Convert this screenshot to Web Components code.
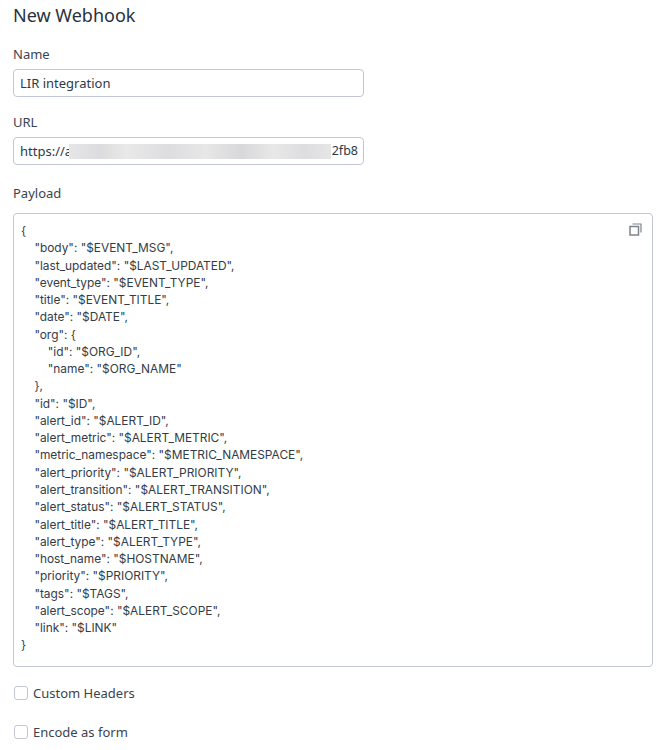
<!DOCTYPE html>
<html>
<head>
<meta charset="utf-8">
<style>
  html, body { margin: 0; background: #fff; }
</style>
</head>
<body>
<webhook-form>
  <form-field label="Name" class="name"><text-box>LIR integration</text-box></form-field>
  <form-field label="URL" class="url"><text-box redacted>https://a</text-box></form-field>
  <form-field label="Payload" class="payload"><payload-box>{
    "body": "$EVENT_MSG",
    "last_updated": "$LAST_UPDATED",
    "event_type": "$EVENT_TYPE",
    "title": "$EVENT_TITLE",
    "date": "$DATE",
    "org": {
        "id": "$ORG_ID",
        "name": "$ORG_NAME"
    },
    "id": "$ID",
    "alert_id": "$ALERT_ID",
    "alert_metric": "$ALERT_METRIC",
    "metric_namespace": "$METRIC_NAMESPACE",
    "alert_priority": "$ALERT_PRIORITY",
    "alert_transition": "$ALERT_TRANSITION",
    "alert_status": "$ALERT_STATUS",
    "alert_title": "$ALERT_TITLE",
    "alert_type": "$ALERT_TYPE",
    "host_name": "$HOSTNAME",
    "priority": "$PRIORITY",
    "tags": "$TAGS",
    "alert_scope": "$ALERT_SCOPE",
    "link": "$LINK"
}</payload-box></form-field>
  <check-row>Custom Headers</check-row>
  <check-row>Encode as form</check-row>
</webhook-form>

<script>
const uiFont = '"Noto Sans", "Open Sans", sans-serif';

class WebhookForm extends HTMLElement {
  constructor() {
    super();
    this.root = this.attachShadow({ mode: 'open' });
    this.root.innerHTML = `
      <style>
        :host {
          display: block;
          padding: 4px 12px 0 13px;
          color: #2d3a47;
          font-family: ${uiFont};
        }
        h1 {
          margin: 0 0 19px;
          font-size: 18px;
          line-height: 22px;
          font-weight: 400;
          color: #28323c;
        }
      </style>
      <h1>New Webhook</h1>
      <slot></slot>
    `;
  }
}

class FormField extends HTMLElement {
  constructor() {
    super();
    this.root = this.attachShadow({ mode: 'open' });
    this.root.innerHTML = `
      <style>
        :host { display: block; margin-bottom: 16px; }
        :host(.url) { margin-bottom: 19px; }
        label {
          display: block;
          font-size: 13px;
          line-height: 18px;
          margin-bottom: 6px;
          color: #3a4450;
        }
        :host(.payload) label { margin-bottom: 11px; }
      </style>
      <label></label>
      <slot></slot>
    `;
    this.root.querySelector('label').textContent = this.getAttribute('label');
  }
}

class TextBox extends HTMLElement {
  constructor() {
    super();
    this.root = this.attachShadow({ mode: 'open' });
    this.root.innerHTML = `
      <style>
        :host {
          display: block;
          position: relative;
          box-sizing: border-box;
          width: 351px;
          height: 28px;
          padding: 0 6px;
          border: 1px solid #c2c6d6;
          border-radius: 4px;
          font-size: 13px;
          line-height: 26px;
          color: #2d3a47;
          overflow: hidden;
          white-space: nowrap;
        }
        .end { display: none; position: absolute; right: 5px; top: 0; font-size: 12.5px; }
        .smear {
          display: none;
          position: absolute;
          left: 55px;
          top: 6px;
          width: 262px;
          height: 15px;
          background:
            linear-gradient(90deg, #e6e6e8, #dcdcde 12%, #e9e9ea 22%, #dddddf 38%, #e7e7e8 52%, #d8d8da 66%, #e8e8e9 78%, #dddddf 90%, #e6e6e8);
        }
        :host([redacted]) .end, :host([redacted]) .smear { display: block; }
      </style>
      <slot></slot><span class="smear"></span><span class="end">2fb8</span>
    `;
  }
}

class PayloadBox extends HTMLElement {
  constructor() {
    super();
    this.root = this.attachShadow({ mode: 'open' });
    this.root.innerHTML = `
      <style>
        :host {
          display: block;
          position: relative;
          box-sizing: border-box;
          width: 640px;
          height: 454px;
          padding: 8px 7px;
          border: 1px solid #c2c6d6;
          border-radius: 4px;
          font-family: Inter, "Liberation Sans", sans-serif;
          font-size: 11.9px;
          line-height: 17.27px;
          color: #333c47;
        }
        pre { margin: 0; font: inherit; }
        svg { position: absolute; top: 9px; right: 10px; }
      </style>
      <pre><slot></slot></pre>
      <svg width="13" height="13" viewBox="0 0 13 13" fill="none" stroke="#7d848c" stroke-width="1.2">
        <rect x="1" y="3.5" width="8.5" height="8.5" stroke-width="1.5"/>
        <path d="M3.5 1h8.5v8.5"/>
      </svg>
    `;
  }
}

class CheckRow extends HTMLElement {
  constructor() {
    super();
    this.root = this.attachShadow({ mode: 'open' });
    this.root.innerHTML = `
      <style>
        :host {
          display: flex;
          align-items: center;
          gap: 5px;
          height: 20px;
          margin-bottom: 19px;
          padding-left: 1px;
          font-size: 13px;
          color: #3a4450;
        }
        i {
          display: block;
          box-sizing: border-box;
          width: 14px;
          height: 14px;
          border: 1.5px solid #c2c6d6;
          border-radius: 3px;
        }
      </style>
      <i></i><slot></slot>
    `;
  }
}

customElements.define('webhook-form', WebhookForm);
customElements.define('form-field', FormField);
customElements.define('text-box', TextBox);
customElements.define('payload-box', PayloadBox);
customElements.define('check-row', CheckRow);
</script>
</body>
</html>
